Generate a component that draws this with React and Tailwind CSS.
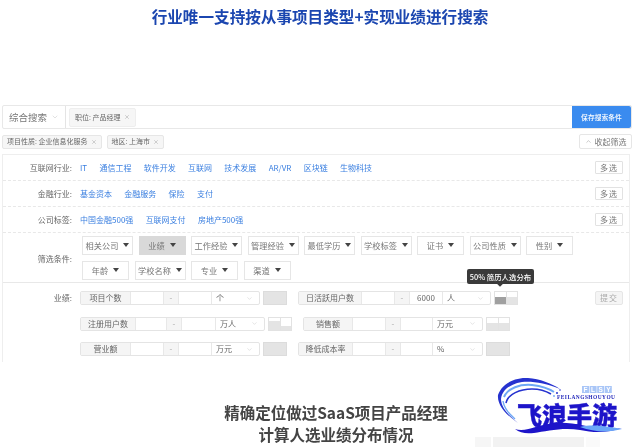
import React from 'react';
import { ChevronDown, ChevronUp, X } from 'lucide-react';

const industryRows = [
  { label: '互联网行业:', links: ['IT', '通信工程', '软件开发', '互联网', '技术发展', 'AR/VR', '区块链', '生物科技'] },
  { label: '金融行业:', links: ['基金资本', '金融服务', '保险', '支付'] },
  { label: '公司标签:', links: ['中国金融500强', '互联网支付', '房地产500强'] },
];

const filterRowOne = [
  { name: '相关公司', width: 'w-[51px]' },
  { name: '业绩', width: 'w-[47px]', active: true },
  { name: '工作经验', width: 'w-[51px]' },
  { name: '管理经验', width: 'w-[51px]' },
  { name: '最低学历', width: 'w-[51px]' },
  { name: '学校标签', width: 'w-[51px]' },
  { name: '证书', width: 'w-[47px]' },
  { name: '公司性质', width: 'w-[51px]' },
  { name: '性别', width: 'w-[47px]' },
];

const filterRowTwo = [
  { name: '年龄', width: 'w-[47px]' },
  { name: '学校名称', width: 'w-[51px]' },
  { name: '专业', width: 'w-[47px]' },
  { name: '渠道', width: 'w-[47px]' },
];

const FilterButton = ({ name, width, active }) => (
  <div
    className={`${width} h-[19px] flex items-center justify-center gap-[5px] border text-[8.2px] text-[#777] ${
      active ? 'bg-[#d9d9d9] border-[#d9d9d9]' : 'bg-white border-[#e6e6e6]'
    }`}
  >
    {name}
    <svg width="6" height="4" viewBox="0 0 6 4"><path d="M0 0h6L3 4z" fill="#444" /></svg>
  </div>
);

// small distribution chart next to each range input
const ChartBox = ({ kind, width = 'w-[24px]' }) => {
  if (kind === 'full') {
    return <div className={`${width} h-[14px] bg-[#e4e4e4] border border-[#dcdcdc]`} />;
  }
  const left = {
    tall: 'h-[9px] bg-[#e4e4e4]',
    dark: 'h-[7px] bg-[#a0a0a0]',
    even: 'h-[7px] bg-[#e4e4e4]',
  }[kind];
  const right = {
    tall: 'h-[4px] bg-[#e4e4e4]',
    dark: 'h-[7px] bg-[#e4e4e4]',
    even: 'h-[7px] bg-[#e4e4e4]',
  }[kind];
  return (
    <div className={`${width} h-[14px] flex border border-[#e2e2e2]`}>
      <div className="flex-1 flex items-end border-r border-[#e2e2e2]">
        <div className={`w-full ${left}`} />
      </div>
      <div className="flex-1 flex items-end">
        <div className={`w-full ${right}`} />
      </div>
    </div>
  );
};

const RangeInput = ({ label, labelWidth, max, unit, first = 'w-[32px]', dash = 'w-[16px]', second = 'w-[32px]', unitWidth = 'w-[48px]' }) => (
  <div className="h-[14px] flex border border-[#e4e4e4] rounded-[2px] bg-white text-[8px] text-[#666] overflow-hidden">
    <div className={`${labelWidth} flex items-center justify-center bg-[#f5f5f5] border-r border-[#e8e8e8]`}>{label}</div>
    <div className={first} />
    <div className={`${dash} flex items-center justify-center bg-[#f5f5f5] border-x border-[#e8e8e8] text-[#aaa]`}>-</div>
    <div className={`${second} flex items-center justify-center`}>{max}</div>
    <div className={`${unitWidth} flex items-center justify-between pl-[4px] pr-[6px] border-l border-[#e8e8e8]`}>
      {unit}
      <ChevronDown size={7} color="#c4c4c4" strokeWidth={1.5} />
    </div>
  </div>
);

const Tag = ({ children }) => (
  <div className="h-[14px] flex items-center gap-[3px] px-[4px] bg-[#f6f6f6] border border-[#e6e6e6] rounded-[2px] text-[7px] text-[#666]">
    {children}
    <X size={6} color="#888" strokeWidth={1.5} />
  </div>
);

const Logo = () => (
  <svg width="130" height="58" viewBox="0 0 130 58" className="absolute left-[496px] top-[377px]">
    <path d="M2 18C6 6 20 0 32 1 44 2 55 6 64 12 50 6 36 4 26 5 14 7 6 13 5 22 5 30 12 38 22 46 10 38 1 28 2 18z" fill="#2632cf" />
    <path d="M8 20C12 11 24 7 36 8 44 9 52 11 58 15" fill="none" stroke="#6ea8f5" strokeWidth="2" />
    <path d="M10 26C12 17 24 12 36 12 44 12 50 14 55 17" fill="none" stroke="#2632cf" strokeWidth="1.6" />
    <path d="M7 24C8 31 13 37 19 42" fill="none" stroke="#6ea8f5" strokeWidth="1.4" />
    <circle cx="58" cy="19" r="0.9" fill="#6ea8f5" />
    <circle cx="61" cy="16" r="1" fill="#2632cf" />
    <circle cx="64" cy="13" r="0.8" fill="#2632cf" />
    {['F', 'L', 'S', 'Y'].map((letter, i) => (
      <g key={letter}>
        <rect x={86 + i * 7.6} y="9" width="7" height="7" fill="#a9c6f7" />
        <text x={89.5 + i * 7.6} y="15" fontSize="6.5" fontWeight="700" textAnchor="middle" fill="#fff" fontFamily="Liberation Sans, sans-serif">{letter}</text>
      </g>
    ))}
    <text x="61" y="21.5" fontSize="5.4" fontWeight="700" fill="#1a1fb8" fontFamily="Liberation Serif, serif" textLength="58">FEILANGSHOUYOU</text>
    <text x="21" y="47.5" fontSize="25" fontWeight="900" fill="#1d14c9" stroke="#1d14c9" strokeWidth="0.4" fontFamily="Noto Sans CJK SC, sans-serif" textLength="100">飞浪手游</text>
    <path d="M19 52C30 56 42 47 60 46 78 45 92 50 106 52 115 53 120 52 126 51 112 56 98 56 84 53 68 50 50 54 38 56 30 57 24 56 19 52z" fill="#1d14c9" />
    <path d="M84 50C96 47 108 49 126 52 112 56 98 55 84 50z" fill="#6aa6f8" />
  </svg>
);

const App = () => (
  <div className="relative w-[640px] h-[447px] overflow-hidden bg-white font-['Noto_Sans_CJK_SC',sans-serif] blur-[0.45px]">
    <h1 className="pt-[4px] h-[105px] text-center text-[15.6px] leading-[24px] font-bold text-[#1b46b0]">
      行业唯一支持按从事项目类型+实现业绩进行搜索
    </h1>

    {/* search bar */}
    <div className="ml-[2px] w-[630px] h-[24px] flex items-stretch bg-white border border-[#e8e8e8] rounded-[2px]">
      <div className="w-[63px] flex items-center gap-[4px] pl-[6px] border-r border-[#e4e4e4] text-[9.5px] text-[#777]">
        综合搜索
        <ChevronDown size={8} color="#c4c4c4" strokeWidth={1.5} />
      </div>
      <div className="flex-1 flex items-center pl-[3px]">
        <div className="h-[19px] flex items-center gap-[3px] px-[5px] bg-[#f6f6f6] border border-[#eee] rounded-[2px] text-[7px] text-[#666]">
          职位: 产品经理
          <X size={6} color="#888" strokeWidth={1.5} />
        </div>
      </div>
      <div className="w-[59px] flex items-center justify-center bg-[#3a8bef] text-white text-[6.8px] font-medium rounded-r-[2px]">
        保存搜索条件
      </div>
    </div>

    {/* selected tags */}
    <div className="mt-[5px] ml-[2px] w-[630px] h-[15px] flex items-center gap-[5px]">
      <Tag>项目性质: 企业信息化服务</Tag>
      <Tag>地区: 上海市</Tag>
      <div className="ml-auto w-[53px] h-[15px] flex items-center justify-center gap-[3px] border border-[#e6e6e6] rounded-[2px] text-[8px] text-[#777]">
        <ChevronUp size={7} color="#888" strokeWidth={1.5} />
        收起筛选
      </div>
    </div>

    {/* filter panel */}
    <div className="mt-[5px] ml-[2px] w-[628px] h-[208px] border-x border-t border-[#eeeeee]">
      {industryRows.map((row) => (
        <div key={row.label} className="h-[26px] flex items-center border-b border-dashed border-[#e8e8e8]">
          <div className="w-[69px] text-right text-[8px] text-[#666]">{row.label}</div>
          <div className="ml-[8px] flex gap-[12.3px] text-[8px] text-[#3a7fe0]">
            {row.links.map((link) => (
              <span key={link}>{link}</span>
            ))}
          </div>
          <div className="ml-auto mr-[6px] w-[28px] h-[13px] flex items-center justify-center border border-[#e2e2e2] rounded-[1px] text-[8px] tracking-[1px] text-[#777]">
            多选
          </div>
        </div>
      ))}

      <div className="h-[50px] flex items-center border-b border-[#e8e8e8]">
        <div className="w-[69px] pt-[2px] text-right text-[8px] text-[#666]">筛选条件:</div>
        <div className="ml-[10px] flex flex-col gap-[6px]">
          <div className="flex gap-[5.5px]">
            {filterRowOne.map((f) => (
              <FilterButton key={f.name} {...f} />
            ))}
          </div>
          <div className="flex gap-[5.5px]">
            {filterRowTwo.map((f) => (
              <FilterButton key={f.name} {...f} />
            ))}
          </div>
        </div>
      </div>

      {/* performance ranges */}
      <div className="pt-[8px] flex flex-col gap-[11.5px]">
        <div className="flex items-center">
          <div className="w-[69px] text-right text-[8px] text-[#666]">业绩:</div>
          <div className="ml-[8px]"><RangeInput label="项目个数" labelWidth="w-[50px]" unit="个" /></div>
          <div className="ml-[3px]"><ChartBox kind="full" /></div>
          <div className="ml-[11px]"><RangeInput label="日活跃用户数" labelWidth="w-[63px]" max="6000" unit="人" /></div>
          <div className="ml-[3px]"><ChartBox kind="dark" /></div>
          <div className="ml-[77px] w-[28px] h-[14px] flex items-center justify-center bg-[#f5f5f5] border border-[#e6e6e6] rounded-[2px] text-[8px] tracking-[1px] text-[#aaa]">提交</div>
        </div>
        <div className="flex items-center">
          <div className="ml-[77px]"><RangeInput label="注册用户数" labelWidth="w-[55px]" first="w-[30px]" second="w-[33px]" unit="万人" unitWidth="w-[49px]" /></div>
          <div className="ml-[3px]"><ChartBox kind="tall" /></div>
          <div className="ml-[11px]"><RangeInput label="销售额" labelWidth="w-[49px]" second="w-[31px]" unit="万元" unitWidth="w-[50px]" /></div>
          <div className="ml-[3px]"><ChartBox kind="even" /></div>
        </div>
        <div className="flex items-center">
          <div className="ml-[77px]"><RangeInput label="营业额" labelWidth="w-[50px]" unit="万元" /></div>
          <div className="ml-[3px]"><ChartBox kind="full" /></div>
          <div className="ml-[11px]"><RangeInput label="降低成本率" labelWidth="w-[54px]" second="w-[31px]" unit="%" unitWidth="w-[50px]" /></div>
          <div className="ml-[3px]"><ChartBox kind="full" /></div>
        </div>
      </div>
    </div>

    {/* caption */}
    <div className="mt-[39px] pl-[32px] text-center text-[15.5px] leading-[22px] font-bold text-[#444]">
      <p>精确定位做过SaaS项目产品经理</p>
      <p>计算人选业绩分布情况</p>
    </div>

    {/* tooltip over the chart */}
    <div className="absolute left-[467px] top-[269px] w-[67px] h-[15px] flex items-center justify-center bg-[#3a3a3a] rounded-[2px] text-[7.4px] font-medium text-white">
      50% 简历人选分布
      <div className="absolute left-[31px] -bottom-[2px] w-[4px] h-[4px] rotate-45 bg-[#3a3a3a]" />
    </div>

    <Logo />

    {/* faint edge of the next slide under the logo */}
    <div className="absolute left-[475px] top-[437px] w-[125px] h-[10px] flex gap-[2px]">
      <div className="w-[16px] bg-[#f6f6f6]" />
      <div className="flex-1 bg-[#f2f2f2]" />
      <div className="w-[14px] bg-[#fafafa]" />
    </div>
  </div>
);

export default App;
